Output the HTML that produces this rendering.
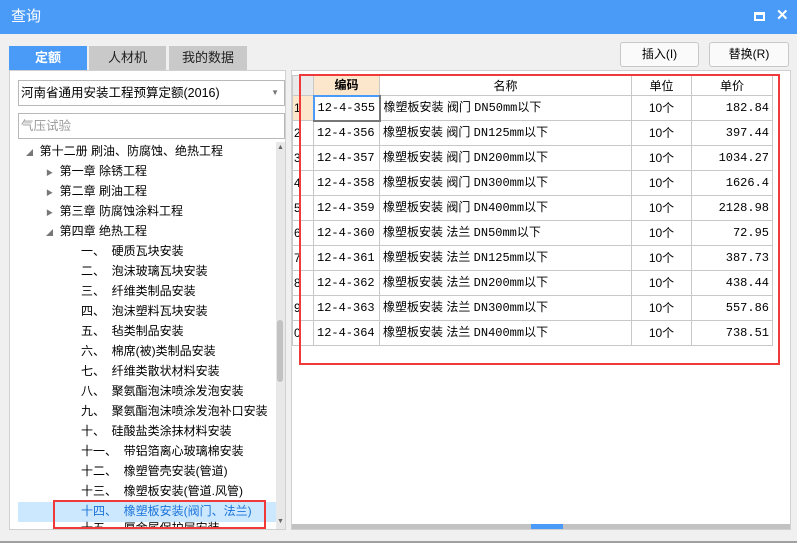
<!DOCTYPE html><html><head><meta charset="utf-8"><style>
*{margin:0;padding:0;box-sizing:border-box}
body{width:797px;height:543px;background:#f0f0f0;font-family:"Liberation Sans","Noto Sans CJK SC",sans-serif;font-size:12px;color:#000;position:relative;overflow:hidden}
.a{position:absolute}
.title{left:0;top:0;width:797px;height:34px;background:#4a9bf8;color:#fff;font-size:15px;line-height:34px;padding-left:11px}
.tab{top:46px;height:24px;line-height:24px;text-align:center;font-size:13px;background:#c9c9c9;color:#222}
.btn{top:42px;height:25px;border:1px solid #c8c8c8;border-radius:3px;background:#fafafa;text-align:center;line-height:23px;font-size:12px}
.tree div{position:absolute;height:20px;line-height:20px;font-size:12px;white-space:nowrap}
table{border-collapse:collapse;position:absolute;left:292px;top:75px;font-size:12px}
td{border:1px solid #c8c8c8;height:25px;line-height:21px;padding:0 3px;white-space:nowrap;background:#fff;vertical-align:middle}
.m{font-family:"Liberation Mono","Noto Sans CJK SC",monospace;font-size:12px}
</style></head><body>
<div class="a title">查询</div>
<div class="a" style="left:754px;top:12px;width:11px;height:9px;border:2px solid #fff;border-top-width:3px"></div>
<div class="a" style="left:776px;top:6px;color:#fff;font-size:15px;font-weight:bold">✕</div>
<div class="a tab" style="left:9px;width:78px;background:#4a9bf8;color:#fff;font-weight:bold">定额</div>
<div class="a tab" style="left:89px;width:77px">人材机</div>
<div class="a tab" style="left:169px;width:78px">我的数据</div>
<div class="a btn" style="left:620px;width:79px">插入(I)</div>
<div class="a btn" style="left:709px;width:80px">替换(R)</div>
<div class="a" style="left:9px;top:70px;width:277px;height:460px;background:#fff;border:1px solid #d0d0d0"></div>
<div class="a" style="left:18px;top:80px;width:267px;height:26px;border:1px solid #b8b8b8;background:#fff;line-height:24px;padding-left:2px;font-size:12.5px">河南省通用安装工程预算定额(2016)<span style="position:absolute;right:5px;color:#777;font-size:8px">▼</span></div>
<div class="a" style="left:18px;top:113px;width:267px;height:26px;border:1px solid #b8b8b8;background:#fff;line-height:24px;padding-left:2px;color:#999;font-size:12.5px">气压试验</div>
<div class="a" style="left:276px;top:142px;width:9px;height:387px;background:#e8e8e8"></div>
<div class="a" style="left:277px;top:320px;width:6px;height:62px;background:#c2c2c2;border-radius:3px"></div>
<div class="a" style="left:277px;top:144px;font-size:7px;color:#666">▲</div>
<div class="a" style="left:277px;top:518px;font-size:7px;color:#666">▼</div>
<div class="a" style="left:18px;top:502px;width:258px;height:20px;background:#cce8ff"></div>
<div class="tree">
<div style="left:26px;top:141px"><span style="font-size:7px;color:#777">◢</span>&nbsp; 第十二册 刷油、防腐蚀、绝热工程</div>
<div style="left:46px;top:161px"><span style="font-size:7px;color:#777">▶</span>&nbsp; 第一章 除锈工程</div>
<div style="left:46px;top:181px"><span style="font-size:7px;color:#777">▶</span>&nbsp; 第二章 刷油工程</div>
<div style="left:46px;top:201px"><span style="font-size:7px;color:#777">▶</span>&nbsp; 第三章 防腐蚀涂料工程</div>
<div style="left:46px;top:221px"><span style="font-size:7px;color:#777">◢</span>&nbsp; 第四章 绝热工程</div>
<div style="left:81px;top:241px">一、&nbsp; 硬质瓦块安装</div>
<div style="left:81px;top:261px">二、&nbsp; 泡沫玻璃瓦块安装</div>
<div style="left:81px;top:281px">三、&nbsp; 纤维类制品安装</div>
<div style="left:81px;top:301px">四、&nbsp; 泡沫塑料瓦块安装</div>
<div style="left:81px;top:321px">五、&nbsp; 毡类制品安装</div>
<div style="left:81px;top:341px">六、&nbsp; 棉席(被)类制品安装</div>
<div style="left:81px;top:361px">七、&nbsp; 纤维类散状材料安装</div>
<div style="left:81px;top:381px">八、&nbsp; 聚氨酯泡沫喷涂发泡安装</div>
<div style="left:81px;top:401px">九、&nbsp; 聚氨酯泡沫喷涂发泡补口安装</div>
<div style="left:81px;top:421px">十、&nbsp; 硅酸盐类涂抹材料安装</div>
<div style="left:81px;top:441px">十一、&nbsp; 带铝箔离心玻璃棉安装</div>
<div style="left:81px;top:461px">十二、&nbsp; 橡塑管壳安装(管道)</div>
<div style="left:81px;top:481px">十三、&nbsp; 橡塑板安装(管道.风管)</div>
<div style="left:81px;top:501px;color:#1a73d9">十四、&nbsp; 橡塑板安装(阀门、法兰)</div>
<div style="left:81px;top:521px;height:8px;overflow:hidden;line-height:14px">十五、&nbsp; 厚金属保护层安装</div>
</div>
<div class="a" style="left:53px;top:500px;width:213px;height:29px;border:2px solid #f03a3a"></div>
<div class="a" style="left:291px;top:70px;width:500px;height:460px;background:#fff;border:1px solid #d0d0d0"></div>
<table>
<tr><td style="width:21px;height:20px;line-height:18px;background:#eaeaea"></td><td style="width:66px;height:20px;line-height:18px;background:#fde7cc;text-align:center;font-weight:bold">编码</td><td style="width:252px;height:20px;line-height:18px;text-align:center">名称</td><td style="width:60px;height:20px;line-height:18px;text-align:center">单位</td><td style="width:81px;height:20px;line-height:18px;text-align:center">单价</td></tr>
<tr><td style="background:#fde7cc;padding:0 1px">1</td><td class="m" style="border:2px solid #777;border-top-color:#4a9bf8;border-left-color:#4a9bf8">12-4-355</td><td>橡塑板安装 阀门 <span class="m">DN50mm</span>以下</td><td style="text-align:center">10个</td><td class="m" style="text-align:right">182.84</td></tr>
<tr><td style="padding:0 1px">2</td><td class="m">12-4-356</td><td>橡塑板安装 阀门 <span class="m">DN125mm</span>以下</td><td style="text-align:center">10个</td><td class="m" style="text-align:right">397.44</td></tr>
<tr><td style="padding:0 1px">3</td><td class="m">12-4-357</td><td>橡塑板安装 阀门 <span class="m">DN200mm</span>以下</td><td style="text-align:center">10个</td><td class="m" style="text-align:right">1034.27</td></tr>
<tr><td style="padding:0 1px">4</td><td class="m">12-4-358</td><td>橡塑板安装 阀门 <span class="m">DN300mm</span>以下</td><td style="text-align:center">10个</td><td class="m" style="text-align:right">1626.4</td></tr>
<tr><td style="padding:0 1px">5</td><td class="m">12-4-359</td><td>橡塑板安装 阀门 <span class="m">DN400mm</span>以下</td><td style="text-align:center">10个</td><td class="m" style="text-align:right">2128.98</td></tr>
<tr><td style="padding:0 1px">6</td><td class="m">12-4-360</td><td>橡塑板安装 法兰 <span class="m">DN50mm</span>以下</td><td style="text-align:center">10个</td><td class="m" style="text-align:right">72.95</td></tr>
<tr><td style="padding:0 1px">7</td><td class="m">12-4-361</td><td>橡塑板安装 法兰 <span class="m">DN125mm</span>以下</td><td style="text-align:center">10个</td><td class="m" style="text-align:right">387.73</td></tr>
<tr><td style="padding:0 1px">8</td><td class="m">12-4-362</td><td>橡塑板安装 法兰 <span class="m">DN200mm</span>以下</td><td style="text-align:center">10个</td><td class="m" style="text-align:right">438.44</td></tr>
<tr><td style="padding:0 1px">9</td><td class="m">12-4-363</td><td>橡塑板安装 法兰 <span class="m">DN300mm</span>以下</td><td style="text-align:center">10个</td><td class="m" style="text-align:right">557.86</td></tr>
<tr><td style="padding:0 1px;overflow:hidden">0</td><td class="m">12-4-364</td><td>橡塑板安装 法兰 <span class="m">DN400mm</span>以下</td><td style="text-align:center">10个</td><td class="m" style="text-align:right">738.51</td></tr>
</table>
<div class="a" style="left:299px;top:74px;width:481px;height:291px;border:2px solid #f03a3a"></div>
<div class="a" style="left:292px;top:524px;width:498px;height:5px;background:#c2c2c2"></div>
<div class="a" style="left:531px;top:524px;width:32px;height:5px;background:#4a9bf8"></div>
<div class="a" style="left:0;top:541px;width:797px;height:2px;background:#a0a0a0"></div>
</body></html>
